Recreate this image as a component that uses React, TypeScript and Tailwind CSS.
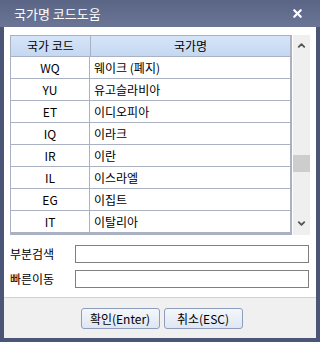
import { ChevronUp, ChevronDown, X } from "lucide-react";

const rows = [
  { code: "WQ", name: "웨이크 (폐지)" },
  { code: "YU", name: "유고슬라비아" },
  { code: "ET", name: "이디오피아" },
  { code: "IQ", name: "이라크" },
  { code: "IR", name: "이란" },
  { code: "IL", name: "이스라엘" },
  { code: "EG", name: "이집트" },
  { code: "IT", name: "이탈리아" },
];

const font = { fontFamily: '"Noto Sans CJK KR", "Liberation Sans", sans-serif' };

export default function App() {
  return (
    <div
      className="w-[320px] h-[342px] bg-[#4b5677] flex flex-col px-[4px] pb-[4px] text-[12px] text-black"
      style={font}
    >
      {/* 타이틀 */}
      <div className="h-[27px] -mx-[4px] px-[14px] flex items-center justify-between bg-gradient-to-b from-[#5a6585] to-[#6b7696]">
        <span className="text-white text-[13px] leading-none">국가명 코드도움</span>
        <X className="w-[13px] h-[13px] text-white mr-[2px]" strokeWidth={4} />
      </div>

      {/* 본문 */}
      <div className="flex-1 bg-white flex flex-col px-[6px] pt-[8px]">
        <div className="flex h-[200px]">
          <div className="w-[282px] flex flex-col border-r-[2px] border-double border-[#aab1c3]">
            <div className="flex h-[22px] bg-gradient-to-b from-[#d6e4f7] to-[#c4d8f2] border border-[#aab1c3] border-r-0">
              <div className="w-[80px] border-r border-[#aab1c3] flex items-center justify-center">국가 코드</div>
              <div className="flex-1 flex items-center justify-center">국가명</div>
            </div>
            {rows.map(({ code, name }) => (
              <div key={code} className="flex h-[22px] border-b border-l border-[#aab1c3]">
                <div className="w-[79px] border-r border-[#aab1c3] flex items-center justify-center">{code}</div>
                <div className="flex-1 flex items-center pl-[4px]">{name}</div>
              </div>
            ))}
            <div className="h-[3px] bg-[#a9b1c3] -mt-[1px]" />
          </div>
          <div className="w-[17px] ml-[1px] bg-[#efefef] flex flex-col items-center">
            <ChevronUp className="w-[11px] h-[11px] mt-[5px] text-[#555]" strokeWidth={4} />
            <div className="flex-1 w-full">
              <div className="h-[17px] w-full bg-[#cdcdcd] mt-[104px]" />
            </div>
            <ChevronDown className="w-[11px] h-[11px] mb-[6px] text-[#555]" strokeWidth={4} />
          </div>
        </div>

        <div className="mt-[10px] flex flex-col gap-[7px]">
          {["부분검색", "빠른이동"].map((label) => (
            <div key={label} className="flex items-center h-[18px]">
              <span className="w-[65px]">{label}</span>
              <div className="flex-1 h-[18px] border border-[#7f7f7f] mr-[1px]" />
            </div>
          ))}
        </div>
      </div>

      {/* 하단 버튼 */}
      <div className="h-[41px] bg-[#f0f0f0] border-t border-[#d2d2d2] flex items-start justify-center gap-[4px] pt-[10px] pl-[3px]">
        <button className="w-[79px] h-[21px] rounded-[3px] border border-[#8e9dbb] bg-gradient-to-b from-[#f4f7fc] to-[#dfe6f2] flex items-center justify-center leading-none">
          확인(Enter)
        </button>
        <button className="w-[79px] h-[21px] rounded-[3px] border border-[#8e9dbb] bg-gradient-to-b from-[#f4f7fc] to-[#dfe6f2] flex items-center justify-center leading-none">
          취소(ESC)
        </button>
      </div>
    </div>
  );
}
